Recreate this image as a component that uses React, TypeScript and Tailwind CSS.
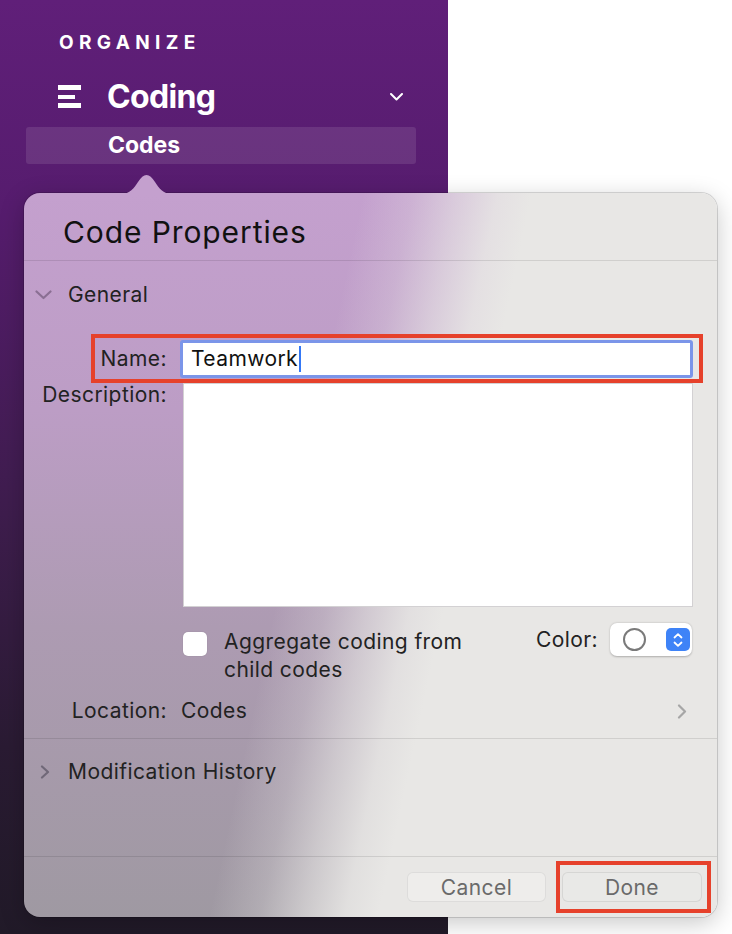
import React from "react";

function MenuIcon() {
  return (
    <svg width="24" height="24" viewBox="0 0 24 24" className="shrink-0">
      <rect x="0" y="0" width="23" height="5" fill="white" />
      <rect x="0" y="10" width="17" height="4" fill="white" />
      <rect x="0" y="18" width="23" height="5" fill="white" />
    </svg>
  );
}

export default function App() {
  return (
    <div className="relative flex w-[732px] h-[934px] overflow-hidden bg-white font-['Inter','Liberation_Sans',sans-serif]">
      {/* Sidebar */}
      <div className="flex flex-col w-[448px] h-full pt-[30px] bg-[linear-gradient(180deg,#601f79_0%,#561c6e_22%,#3e1d4d_55%,#2a1b33_80%,#211a28_100%)]">
        <div className="pl-[59px] h-[25px] leading-[25px] text-[19px] font-bold tracking-[0.28em] text-white">
          ORGANIZE
        </div>
        <div className="mt-[20px] h-[44px] flex items-center pl-[58px] pr-[45px]">
          <MenuIcon />
          <span className="ml-[25px] text-[32px] font-bold tracking-[-0.02em] text-white leading-none">
            Coding
          </span>
          <svg width="13" height="8" viewBox="0 0 13 8" className="ml-auto">
            <path d="M1 1 L6.5 6.5 L12 1" stroke="white" strokeWidth="2" fill="none" strokeLinecap="round" strokeLinejoin="round" />
          </svg>
        </div>
        <div className="mt-[8px] ml-[26px] w-[390px] h-[37px] flex items-center pl-[82px] rounded-[3px] bg-white/10">
          <span className="text-[23px] font-bold text-white leading-none">Codes</span>
        </div>
      </div>
      <div className="flex-1 h-full bg-white" />

      {/* Popover */}
      <div className="absolute left-[24px] top-[193px] w-[693px] h-[724px] rounded-[16px] shadow-[0_0_0_1px_rgba(0,0,0,0.14),0_6px_24px_rgba(0,0,0,0.22)] flex flex-col text-[#1f1b21] text-[21px] tracking-[0.02em] bg-[linear-gradient(102deg,rgba(232,231,229,0)_40%,rgba(232,231,229,0.25)_46%,rgba(232,231,229,0.6)_51%,rgba(232,231,229,0.9)_56%,#e8e7e5_60%),linear-gradient(180deg,#c4a0ce_0%,#bc9dc5_30%,#ad9bb2_60%,#9f99a2_100%)]">
        {/* arrow */}
        <svg width="51" height="19" viewBox="0 0 51 19" className="absolute left-[97px] -top-[18px]">
          <path d="M0 19 C9 19 13 13 17 7 C20 2.5 22.5 0 25.5 0 C28.5 0 31 2.5 34 7 C38 13 42 19 51 19 Z" fill="#c4a0ce" />
        </svg>

        {/* header */}
        <div className="h-[67px] pt-[11px] flex items-center pl-[39px] text-[30px] tracking-[0.03em] text-[#111] leading-none">
          Code Properties
        </div>
        <div className="h-px bg-black/10" />

        {/* General */}
        <div className="h-[68px] flex items-center">
          <svg width="17" height="10" viewBox="0 0 17 10" className="ml-[11px]">
            <path d="M1.5 1.5 L8.5 8 L15.5 1.5" stroke="#8a6f93" strokeWidth="2.2" fill="none" strokeLinecap="round" strokeLinejoin="round" />
          </svg>
          <span className="ml-[16px] text-[#222]">General</span>
        </div>

        {/* Name row */}
        <div className="mt-[5px] ml-[67px] w-[612px] h-[49px] border-4 border-[#e6412b] flex items-center">
          <span className="w-[72px] text-right text-[#222]">Name:</span>
          <div className="ml-[13px] w-[513px] h-[38px] rounded-[3px] border-[3px] border-[#7b95e9] bg-white flex items-center pl-[8px]">
            <span className="text-[#111] leading-none">Teamwork</span>
            <span className="inline-block w-[2px] h-[26px] bg-[#3478f6] ml-[1px]" />
          </div>
        </div>

        {/* Description */}
        <div className="flex h-[224px]">
          <span className="w-[143px] text-right leading-[24px] text-[#222]">Description:</span>
          <div className="ml-[16px] w-[510px] h-full bg-white border border-[#d3d1d3]" />
        </div>

        {/* Checkbox + Color */}
        <div className="mt-[16px] h-[61px] flex items-start">
          <div className="ml-[159px] mt-[9px] w-[24px] h-[24px] rounded-[5px] bg-white shadow-[0_0_1px_rgba(0,0,0,0.25)]" />
          <div className="ml-[17px] mt-[5px] leading-[28px] text-[#222]">
            Aggregate coding from
            <br />
            child codes
          </div>
          <div className="ml-auto mr-[25px] h-[33px] flex items-center">
            <span className="text-[#222]">Color:</span>
            <div className="ml-[12px] w-[82px] h-[33px] rounded-[7px] bg-white shadow-[0_0.5px_2px_rgba(0,0,0,0.25)] flex items-center">
              <div className="ml-[13px] w-[23px] h-[23px] rounded-full border-2 border-[#7a7a7a]" />
              <div className="ml-auto mr-[2px] w-[24px] h-[23px] rounded-[5px] bg-[#3e83f7] flex items-center justify-center">
                <svg width="12" height="16" viewBox="0 0 12 16">
                  <path d="M2.5 5.5 L6 2.2 L9.5 5.5" stroke="white" strokeWidth="1.8" fill="none" strokeLinecap="round" strokeLinejoin="round" />
                  <path d="M2.5 10.5 L6 13.8 L9.5 10.5" stroke="white" strokeWidth="1.8" fill="none" strokeLinecap="round" strokeLinejoin="round" />
                </svg>
              </div>
            </div>
          </div>
        </div>

        {/* Location */}
        <div className="h-[54px] flex items-center">
          <span className="w-[143px] text-right text-[#222]">Location:</span>
          <span className="ml-[14px] text-[#222]">Codes</span>
          <svg width="10" height="15" viewBox="0 0 10 15" className="ml-auto mr-[30px]">
            <path d="M2 1.5 L8 7.5 L2 13.5" stroke="#a6a6a6" strokeWidth="2.2" fill="none" strokeLinecap="round" strokeLinejoin="round" />
          </svg>
        </div>
        <div className="h-px bg-black/10" />

        {/* Modification History */}
        <div className="h-[66px] flex items-center">
          <svg width="10" height="14" viewBox="0 0 10 14" className="ml-[16px]">
            <path d="M2 1.5 L8 7 L2 12.5" stroke="#706878" strokeWidth="2.2" fill="none" strokeLinecap="round" strokeLinejoin="round" />
          </svg>
          <span className="ml-[18px] text-[#222]">Modification History</span>
        </div>
        <div className="flex-1" />
        <div className="h-px bg-black/10" />

        {/* Footer */}
        <div className="h-[60px] flex items-center justify-end pr-[6px]">
          <button className="w-[139px] h-[30px] rounded-[6px] border border-black/[0.07] bg-white/25 text-[#6a6a6a] leading-none">
            Cancel
          </button>
          <div className="ml-[10px] w-[155px] h-[52px] border-4 border-[#e6412b] flex items-center pl-[2px]">
            <button className="w-[140px] h-[30px] rounded-[6px] border border-black/[0.08] bg-[#e9e9e7] text-[#6a6a6a] leading-none">
              Done
            </button>
          </div>
        </div>
      </div>
    </div>
  );
}
